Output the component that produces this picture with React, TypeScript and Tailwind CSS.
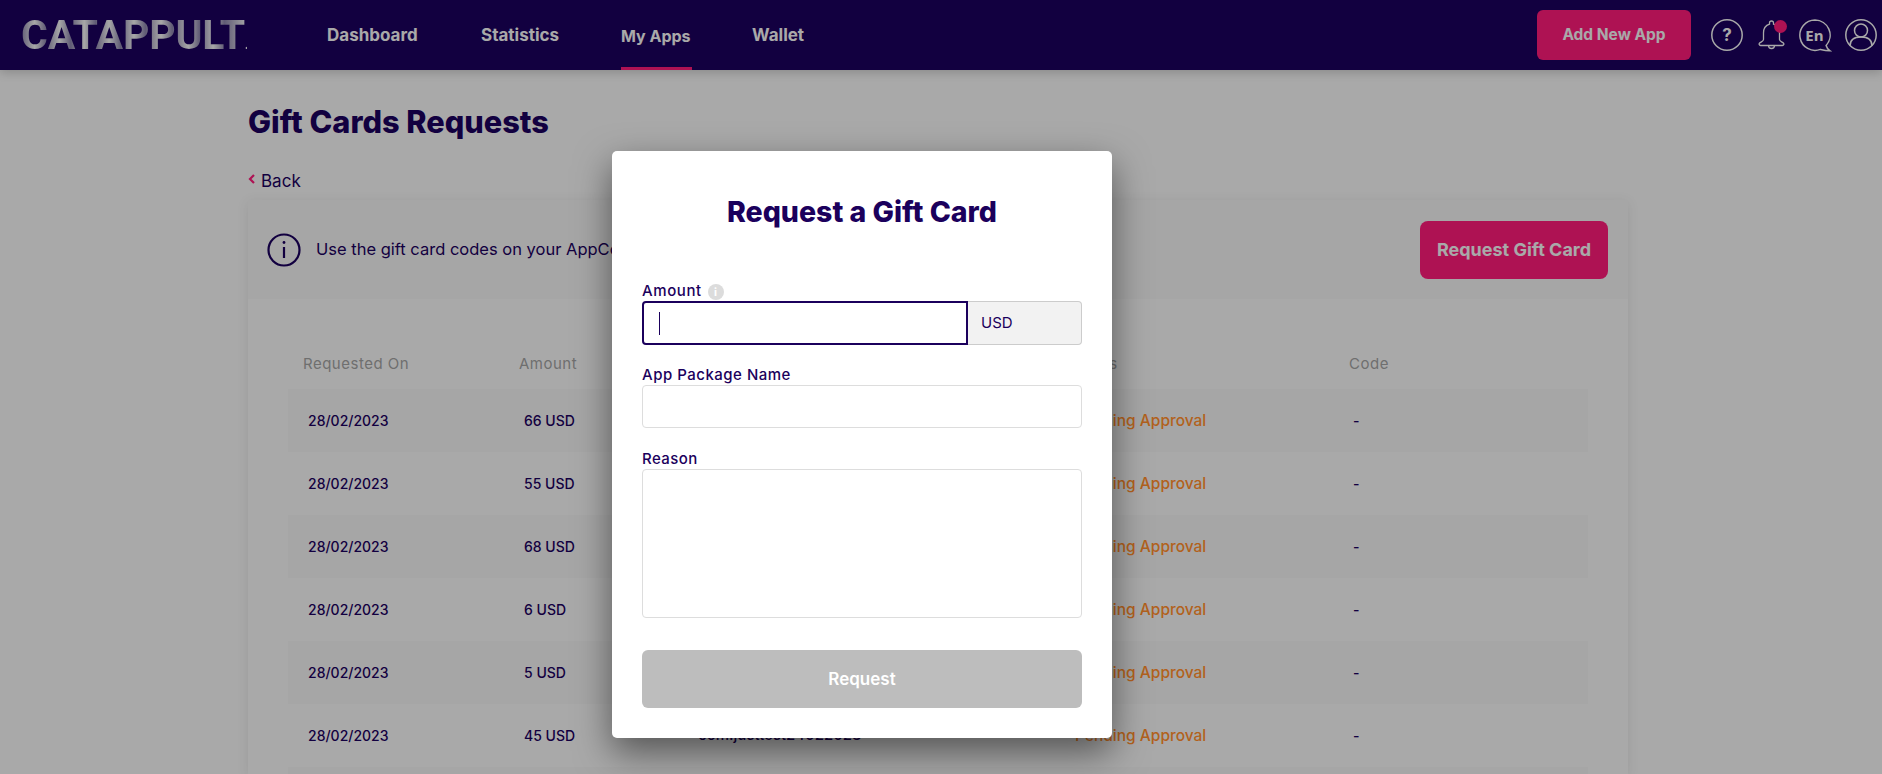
import React from 'react'

const rows = [
  { date: '28/02/2023', amount: '66 USD', pkg: 'com.justtest24022023' },
  { date: '28/02/2023', amount: '55 USD', pkg: 'com.justtest24022023' },
  { date: '28/02/2023', amount: '68 USD', pkg: 'com.justtest24022023' },
  { date: '28/02/2023', amount: '6 USD', pkg: 'com.justtest24022023' },
  { date: '28/02/2023', amount: '5 USD', pkg: 'com.justtest24022023' },
  { date: '28/02/2023', amount: '45 USD', pkg: 'com.justtest24022023' },
]

function TopIcons() {
  return (
    <div className="flex items-center text-[#f2f2f2]">
      <svg width="32" height="32" viewBox="0 0 32 32" fill="none" stroke="currentColor" strokeWidth="1.5">
        <circle cx="16" cy="16" r="15.200" />
        <text x="16" y="22" textAnchor="middle" fill="currentColor" stroke="none" fontSize="17" fontWeight="700" fontFamily="Inter, sans-serif">?</text>
      </svg>
      <div className="relative w-[27px] h-[32px] ml-[15px]">
        <svg width="27" height="30" viewBox="0 0 27 30" fill="none" stroke="currentColor" strokeWidth="1.300" className="absolute left-0 top-[1px]">
          <path d="M13.500 1a2 2 0 0 1 2 2v1.200c4 1.200 6 4.600 6 8.800v6.500c0 1.800 2.600 2.500 3.900 3.600.9.800.4 2.400-1 2.400H2.600c-1.400 0-1.900-1.600-1-2.400 1.300-1.100 3.900-1.800 3.900-3.600V13c0-4.200 2-7.600 6-8.800V3a2 2 0 0 1 2-2z" />
          <path d="M10.500 25.500a3 3 0 0 0 6 0" />
        </svg>
        <span className="absolute left-[16px] top-[1px] w-[13px] h-[13px] rounded-full bg-[#f91a78]" />
      </div>
      <svg width="33" height="33" viewBox="0 0 33 33" fill="none" stroke="currentColor" strokeWidth="1.500" className="ml-[14px]">
        <path d="M16 1a15.200 15.200 0 1 0 5.500 29.400c2.800.7 6 1.300 9.500 1.400-1.800-1.300-3.300-3-3.900-5.300A15.200 15.200 0 0 0 16 1z" />
        <text x="15.500" y="21.500" textAnchor="middle" fill="currentColor" stroke="none" fontSize="15" fontWeight="700" fontFamily="'Open Sans', sans-serif">En</text>
      </svg>
      <svg width="32" height="32" viewBox="0 0 32 32" fill="none" stroke="currentColor" strokeWidth="1.500" className="ml-[13px]">
        <circle cx="16" cy="16" r="15.200" />
        <circle cx="16" cy="11.500" r="6.500" />
        <path d="M5 27c0-6 4.500-9 11-9s11 3 11 9" />
      </svg>
    </div>
  )
}

function Header() {
  return (
    <header className="h-[70px] bg-[#1b005c] flex items-center justify-between pl-[21px] pr-[5px] shadow-[0_2px_10px_rgba(0,0,0,0.2)]">
      <div className="flex items-center h-full">
        <span className="w-[226px] whitespace-nowrap text-[41px] leading-none font-['Roboto',sans-serif] font-bold tracking-[-0.2px] text-transparent bg-clip-text bg-[linear-gradient(90deg,#8a83a8_0%,#f0f0f0_6%,#8a83a8_11%,#f0f0f0_17%,#8a83a8_22%,#f0f0f0_28%,#8a83a8_33%,#f0f0f0_39%,#8a83a8_44%,#f0f0f0_50%,#8a83a8_55%,#f0f0f0_62%,#8a83a8_67%,#f0f0f0_74%,#8a83a8_79%,#f0f0f0_85%,#8a83a8_90%,#f0f0f0_100%)]">
          CATAPPULT<span className="text-[14px] tracking-normal">.</span>
        </span>
        <nav className="flex h-full ml-[80px] gap-[60px] text-[17px] font-bold text-[#f2f2f2]">
          <a className="flex items-center w-[94px] pt-[1px]">Dashboard</a>
          <a className="flex items-center w-[80px] pt-[1px]">Statistics</a>
          <a className="flex items-center w-[71px] border-b-[3px] border-[#f91a78] pt-[4px] text-[16px]">My Apps</a>
          <a className="flex items-center w-[54px] pt-[1px]">Wallet</a>
        </nav>
      </div>
      <div className="flex items-center gap-[20px]">
        <button className="w-[154px] h-[50px] rounded-md bg-[#f91a78] text-[15.500px] font-bold text-[#f2f2f2]">Add New App</button>
        <TopIcons />
      </div>
    </header>
  )
}

function Table() {
  return (
    <div className="bg-[#f3f3f3] px-[40px] pt-[32px]">
      <div className="grid grid-cols-[216px_174px_377px_279px_1fr] h-[58px] pt-[8px] items-center px-[15px] text-[15px] tracking-[0.5px] text-[#9f9f9f]">
        <span>Requested On</span>
        <span>Amount</span>
        <span>App Package Name</span>
        <span>Status</span>
        <span>Code</span>
      </div>
      {rows.map((row, i) => (
        <div
          key={i}
          className={`grid grid-cols-[216px_174px_377px_278px_1fr] h-[63px] items-center px-[20px] text-[14px] font-medium text-[#1b005c] ${i % 2 === 0 ? 'bg-[#eeeeee]' : ''}`}
        >
          <span>{row.date}</span>
          <span>{row.amount}</span>
          <span className="text-[15px]">{row.pkg}</span>
          <span className="text-[15.500px] pt-[1px] text-[#ff8c2b]">Pending Approval</span>
          <span>-</span>
        </div>
      ))}
      <div className="h-[8px] bg-[#eeeeee]" />
    </div>
  )
}

function RequestModal() {
  return (
    <div className="absolute left-[612px] top-[151px] w-[500px] h-[587px] bg-white rounded-[5px] shadow-[0_14px_36px_rgba(0,0,0,0.5)] px-[30px] text-[#1b005c]">
      <h2 className="mt-[40px] h-[42px] text-center text-[28.500px] leading-[42px] font-extrabold">Request a Gift Card</h2>
      <label className="mt-[48px] h-[20px] pt-[1px] flex items-center gap-[6px] text-[15px] tracking-[0.6px] font-medium">
        Amount
        <span className="w-[16px] h-[16px] rounded-full bg-[#dcdcdc] text-white text-[11px] leading-[16px] text-center font-bold">i</span>
      </label>
      <div className="flex h-[44px]">
        <div className="w-[326px] border-2 border-[#1b005c] rounded-l-[4px] flex items-center pl-[15px]">
          <span className="w-px h-[23px] bg-[#1b005c]" />
        </div>
        <div className="flex-1 bg-[#f2f2f2] border border-l-0 border-[#cccccc] rounded-r-[4px] flex items-center pl-[13px] pt-[1px] text-[15px]">USD</div>
      </div>
      <label className="block mt-[20px] h-[20px] leading-[20px] text-[15px] tracking-[0.5px] font-medium">App Package Name</label>
      <div className="h-[43px] border border-[#dddddd] rounded-[4px]" />
      <label className="block mt-[21px] h-[20px] leading-[20px] text-[15px] tracking-[0.4px] font-medium">Reason</label>
      <div className="h-[149px] border border-[#dddddd] rounded-[4px]" />
      <button className="mt-[32px] w-full h-[58px] pt-[1px] rounded-md bg-[#bdbdbd] text-white text-[17px] font-semibold">Request</button>
    </div>
  )
}

export default function App() {
  return (
    <div className="relative h-[774px] overflow-hidden bg-[#f2f2f2] font-['Inter',sans-serif]">
      <Header />
      <main className="w-[1380px] ml-[248px] text-[#1b005c]">
        <h1 className="mt-[31px] h-[42px] text-[30.700px] leading-[42px] font-extrabold">Gift Cards Requests</h1>
        <a className="mt-[28px] h-[21px] -mb-[2px] flex items-center gap-[5px] text-[17px]">
          <svg width="8" height="10" viewBox="0 0 8 10" fill="none" stroke="#f91a78" strokeWidth="2.200" className="-mt-[5px]">
            <path d="M6 1 2 5l4 4" />
          </svg>
          Back
        </a>
        <section className="mt-[10px] shadow-[0_2px_12px_rgba(0,0,0,0.08)]">
          <div className="h-[99px] bg-[#eeeeee] flex items-center justify-between pl-[19px] pr-[20px]">
            <div className="flex items-center gap-[15px] text-[16.500px]">
              <svg width="34" height="34" viewBox="0 0 34 34" fill="none" stroke="#1b005c" strokeWidth="2.200">
                <circle cx="17" cy="17" r="15.500" />
                <path d="M17 14v11" />
                <circle cx="17" cy="9.500" r="1.400" fill="#1b005c" stroke="none" />
              </svg>
              Use the gift card codes on your AppCoins balance to test your in-app purchases.
            </div>
            <button className="w-[188px] h-[58px] rounded-lg bg-[#f91a78] text-[#f2f2f2] text-[18px] font-bold">Request Gift Card</button>
          </div>
          <Table />
        </section>
      </main>
      <div className="absolute inset-0 bg-black/30" />
      <RequestModal />
    </div>
  )
}
